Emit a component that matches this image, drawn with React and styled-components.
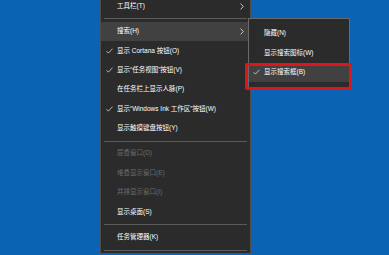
import React from 'react';
import styled, { createGlobalStyle, css } from 'styled-components';

const GlobalStyle = createGlobalStyle`
  html, body {
    margin: 0;
    padding: 0;
    background: #0a63b3;
    overflow: hidden;
  }
  * {
    box-sizing: border-box;
  }
`;

const Desktop = styled.div`
  position: relative;
  width: 389px;
  height: 255px;
  overflow: hidden;
  display: flex;
  align-items: flex-start;
  padding-left: 100px;
  background: #0a63b3;
  font-family: "Liberation Sans", "Noto Sans CJK SC", sans-serif;
  font-size: 6.5px;
  color: #ffffff;
`;

const Menu = styled.div`
  width: 151px;
  margin-top: -3.7px;
  background: #2b2b2b;
  border-left: 1px solid #4c4c4c;
  border-right: 1px solid #4c4c4c;
  display: flex;
  flex-direction: column;
`;

const Item = styled.div`
  height: 19.4px;
  display: flex;
  align-items: center;
  padding: 0 6px 0 4px;
  white-space: nowrap;
  color: ${(props) => (props.disabled ? '#6b6b6b' : '#ffffff')};

  ${(props) => props.active
    && css`
      background: #414141;
    `};
`;

const CheckSlot = styled.span`
  width: 12px;
  height: 10px;
  display: flex;
  align-items: center;
  flex-shrink: 0;
  padding-left: 1px;
`;

const Label = styled.span`
  flex: 1;
  line-height: 1;
`;

const Separator = styled.div`
  height: 6px;
  display: flex;
  align-items: center;
  padding: 0 3px;

  &::after {
    content: '';
    flex: 1;
    height: 1px;
    background: #5a5a5a;
  }
`;

const SubMenu = styled.div`
  position: absolute;
  left: 248px;
  top: 18px;
  width: 102px;
  height: 70px;
  padding: 5px 0;
  background: #2b2b2b;
  border: 1px solid #6a6a6a;
  display: flex;
  flex-direction: column;
`;

const SubItem = styled(Item)`
  padding-left: 2px;

  ${CheckSlot} {
    width: 13px;
    padding-left: 2px;
  }
`;

const Highlight = styled.div`
  position: absolute;
  left: 245px;
  top: 63px;
  width: 107px;
  height: 27px;
  border: 3px solid #e0141c;
  border-radius: 2px;
`;

const Check = () => (
  <svg width="7" height="6" viewBox="0 0 8 7">
    <polyline points="0.5,3.8 2.7,6 7.5,0.8" fill="none" stroke="#e0e0e0" strokeWidth="0.9" />
  </svg>
);

const Chevron = () => (
  <svg width="4" height="7" viewBox="0 0 4 7">
    <polyline points="0.6,0.6 3.3,3.5 0.6,6.4" fill="none" stroke="#d8d8d8" strokeWidth="0.9" />
  </svg>
);

const mainItems = [
  { label: '工具栏(T)', sub: true },
  'sep',
  { label: '搜索(H)', sub: true, active: true },
  { label: '显示 Cortana 按钮(O)', checked: true },
  { label: '显示“任务视图”按钮(V)', checked: true },
  { label: '在任务栏上显示人脉(P)' },
  { label: '显示“Windows Ink 工作区”按钮(W)', checked: true },
  { label: '显示触摸键盘按钮(Y)' },
  'sep',
  { label: '层叠窗口(D)', disabled: true },
  { label: '堆叠显示窗口(E)', disabled: true },
  { label: '并排显示窗口(I)', disabled: true },
  { label: '显示桌面(S)' },
  'sep',
  { label: '任务管理器(K)' },
  'sep',
];

const searchItems = [
  { label: '隐藏(N)' },
  { label: '显示搜索图标(W)' },
  { label: '显示搜索框(B)', checked: true, active: true },
];

const App = () => (
  <>
    <GlobalStyle />
    <Desktop>
      <Menu>
        {mainItems.map((item, i) => (item === 'sep' ? (
          <Separator key={i} />
        ) : (
          <Item key={i} active={item.active} disabled={item.disabled}>
            <CheckSlot>{item.checked && <Check />}</CheckSlot>
            <Label>{item.label}</Label>
            {item.sub && <Chevron />}
          </Item>
        )))}
      </Menu>
      <SubMenu>
        {searchItems.map((item) => (
          <SubItem key={item.label} active={item.active}>
            <CheckSlot>{item.checked && <Check />}</CheckSlot>
            <Label>{item.label}</Label>
          </SubItem>
        ))}
      </SubMenu>
      <Highlight />
    </Desktop>
  </>
);

export default App;
